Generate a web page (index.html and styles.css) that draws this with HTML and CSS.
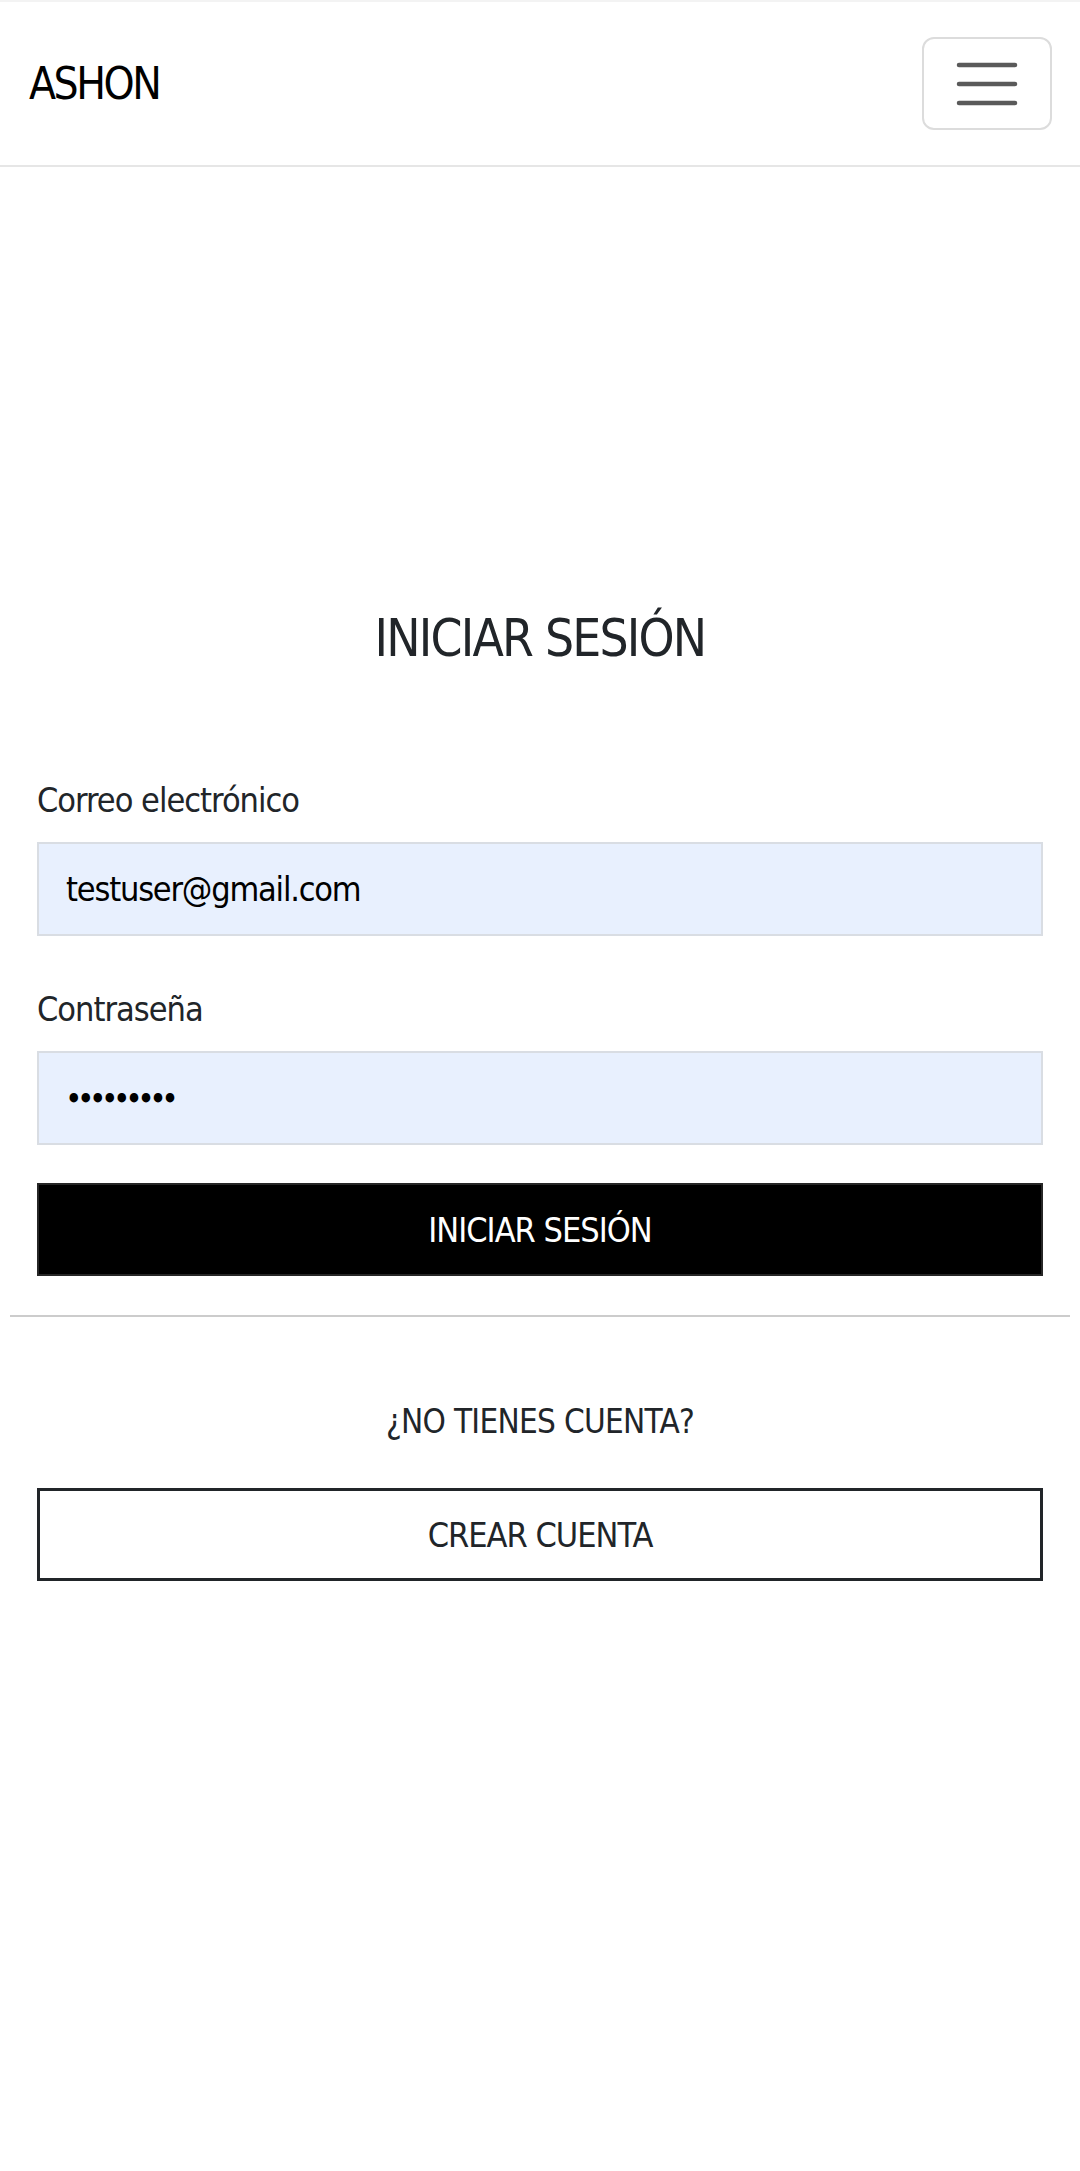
FILE: index.html
```html
<!DOCTYPE html>
<html lang="es">
<head>
<meta charset="utf-8">
<title>ASHON - Iniciar sesión</title>
<link rel="stylesheet" href="styles.css">
</head>
<body>
<header class="navbar">
  <a class="brand" href="#">ASHON</a>
  <button class="toggler" type="button" aria-label="Menú">
    <svg class="toggler-icon" width="62" height="46" viewBox="0 0 62 46" aria-hidden="true">
      <path d="M3 4H59M3 23H59M3 42H59" stroke="#5a5a5a" stroke-width="4.5" stroke-linecap="round" fill="none"/>
    </svg>
  </button>
</header>
<main class="page">
  <section class="login">
    <h1 class="login-title">INICIAR SESIÓN</h1>
    <form class="login-form">
      <div class="field">
        <label class="field-label" for="email">Correo electrónico</label>
        <input class="field-input" id="email" type="email" value="testuser@gmail.com">
      </div>
      <div class="field">
        <label class="field-label" for="password">Contraseña</label>
        <input class="field-input field-password" id="password" type="password" value="123456789">
      </div>
      <button class="btn btn-dark" type="button">INICIAR SESIÓN</button>
    </form>
  </section>
  <hr class="divider">
  <section class="signup">
    <p class="signup-text">¿NO TIENES CUENTA?</p>
    <a class="btn btn-outline" href="#">CREAR CUENTA</a>
  </section>
</main>
</body>
</html>
```

FILE: styles.css
```css
* {
  box-sizing: border-box;
}

html, body {
  margin: 0;
  padding: 0;
  background: #ffffff;
}

body {
  font-family: "Liberation Sans Narrow", "DejaVu Sans Condensed", "Roboto", sans-serif;
  color: #212529;
}

.navbar {
  display: flex;
  align-items: center;
  justify-content: space-between;
  height: 167px;
  padding: 0 28px 0 29px;
  border-top: 2px solid #f3f3f3;
  border-bottom: 2px solid #e6e6e6;
}

.brand {
  font-size: 44px;
  line-height: 46px;
  letter-spacing: -2.5px;
  color: #000;
  text-decoration: none;
}

.toggler {
  display: flex;
  align-items: center;
  justify-content: center;
  width: 130px;
  height: 93px;
  padding: 0;
  background: #fff;
  border: 2px solid #dcdcdc;
  border-radius: 12px;
}

.toggler-icon {
  display: block;
}

.page {
  display: flex;
  flex-direction: column;
  padding: 0 10px;
}

.login {
  display: flex;
  flex-direction: column;
  padding: 440px 27px 0;
}

.login-title {
  margin: 0;
  font-size: 51px;
  line-height: 64px;
  font-weight: 400;
  letter-spacing: -1.8px;
  text-align: center;
  color: #212529;
}

.login-form {
  display: flex;
  flex-direction: column;
  margin-top: 107px;
}

.field {
  display: flex;
  flex-direction: column;
  gap: 20px;
}

.field + .field {
  margin-top: 51px;
}

.field-label {
  font-size: 34px;
  line-height: 44px;
  letter-spacing: -1px;
  color: #212529;
}

.field-input {
  height: 94px;
  width: 100%;
  padding: 0 27px;
  font-family: inherit;
  font-size: 34px;
  letter-spacing: -1.2px;
  color: #000;
  background: #e8f0fe;
  border: 2px solid #d9dde3;
  border-radius: 0;
  outline: none;
}

.field-password {
  font-size: 27px;
  letter-spacing: -3.5px;
  font-weight: 700;
}

.btn {
  display: flex;
  align-items: center;
  justify-content: center;
  height: 93px;
  width: 100%;
  font-family: inherit;
  font-size: 34px;
  letter-spacing: -1px;
  text-decoration: none;
  border-radius: 0;
}

.btn-dark {
  margin-top: 38px;
  background: #000;
  color: #fff;
  border: 2px solid #262626;
}

.divider {
  margin: 39px 0 0;
  height: 2px;
  border: 0;
  background: #cccccc;
}

.signup {
  display: flex;
  flex-direction: column;
  padding: 84px 27px 0;
}

.signup-text {
  margin: 0;
  font-size: 33px;
  line-height: 42px;
  letter-spacing: -0.7px;
  text-align: center;
  color: #212529;
}

.btn-outline {
  margin-top: 45px;
  background: #fff;
  color: #212529;
  border: 3px solid #212529;
}
```
